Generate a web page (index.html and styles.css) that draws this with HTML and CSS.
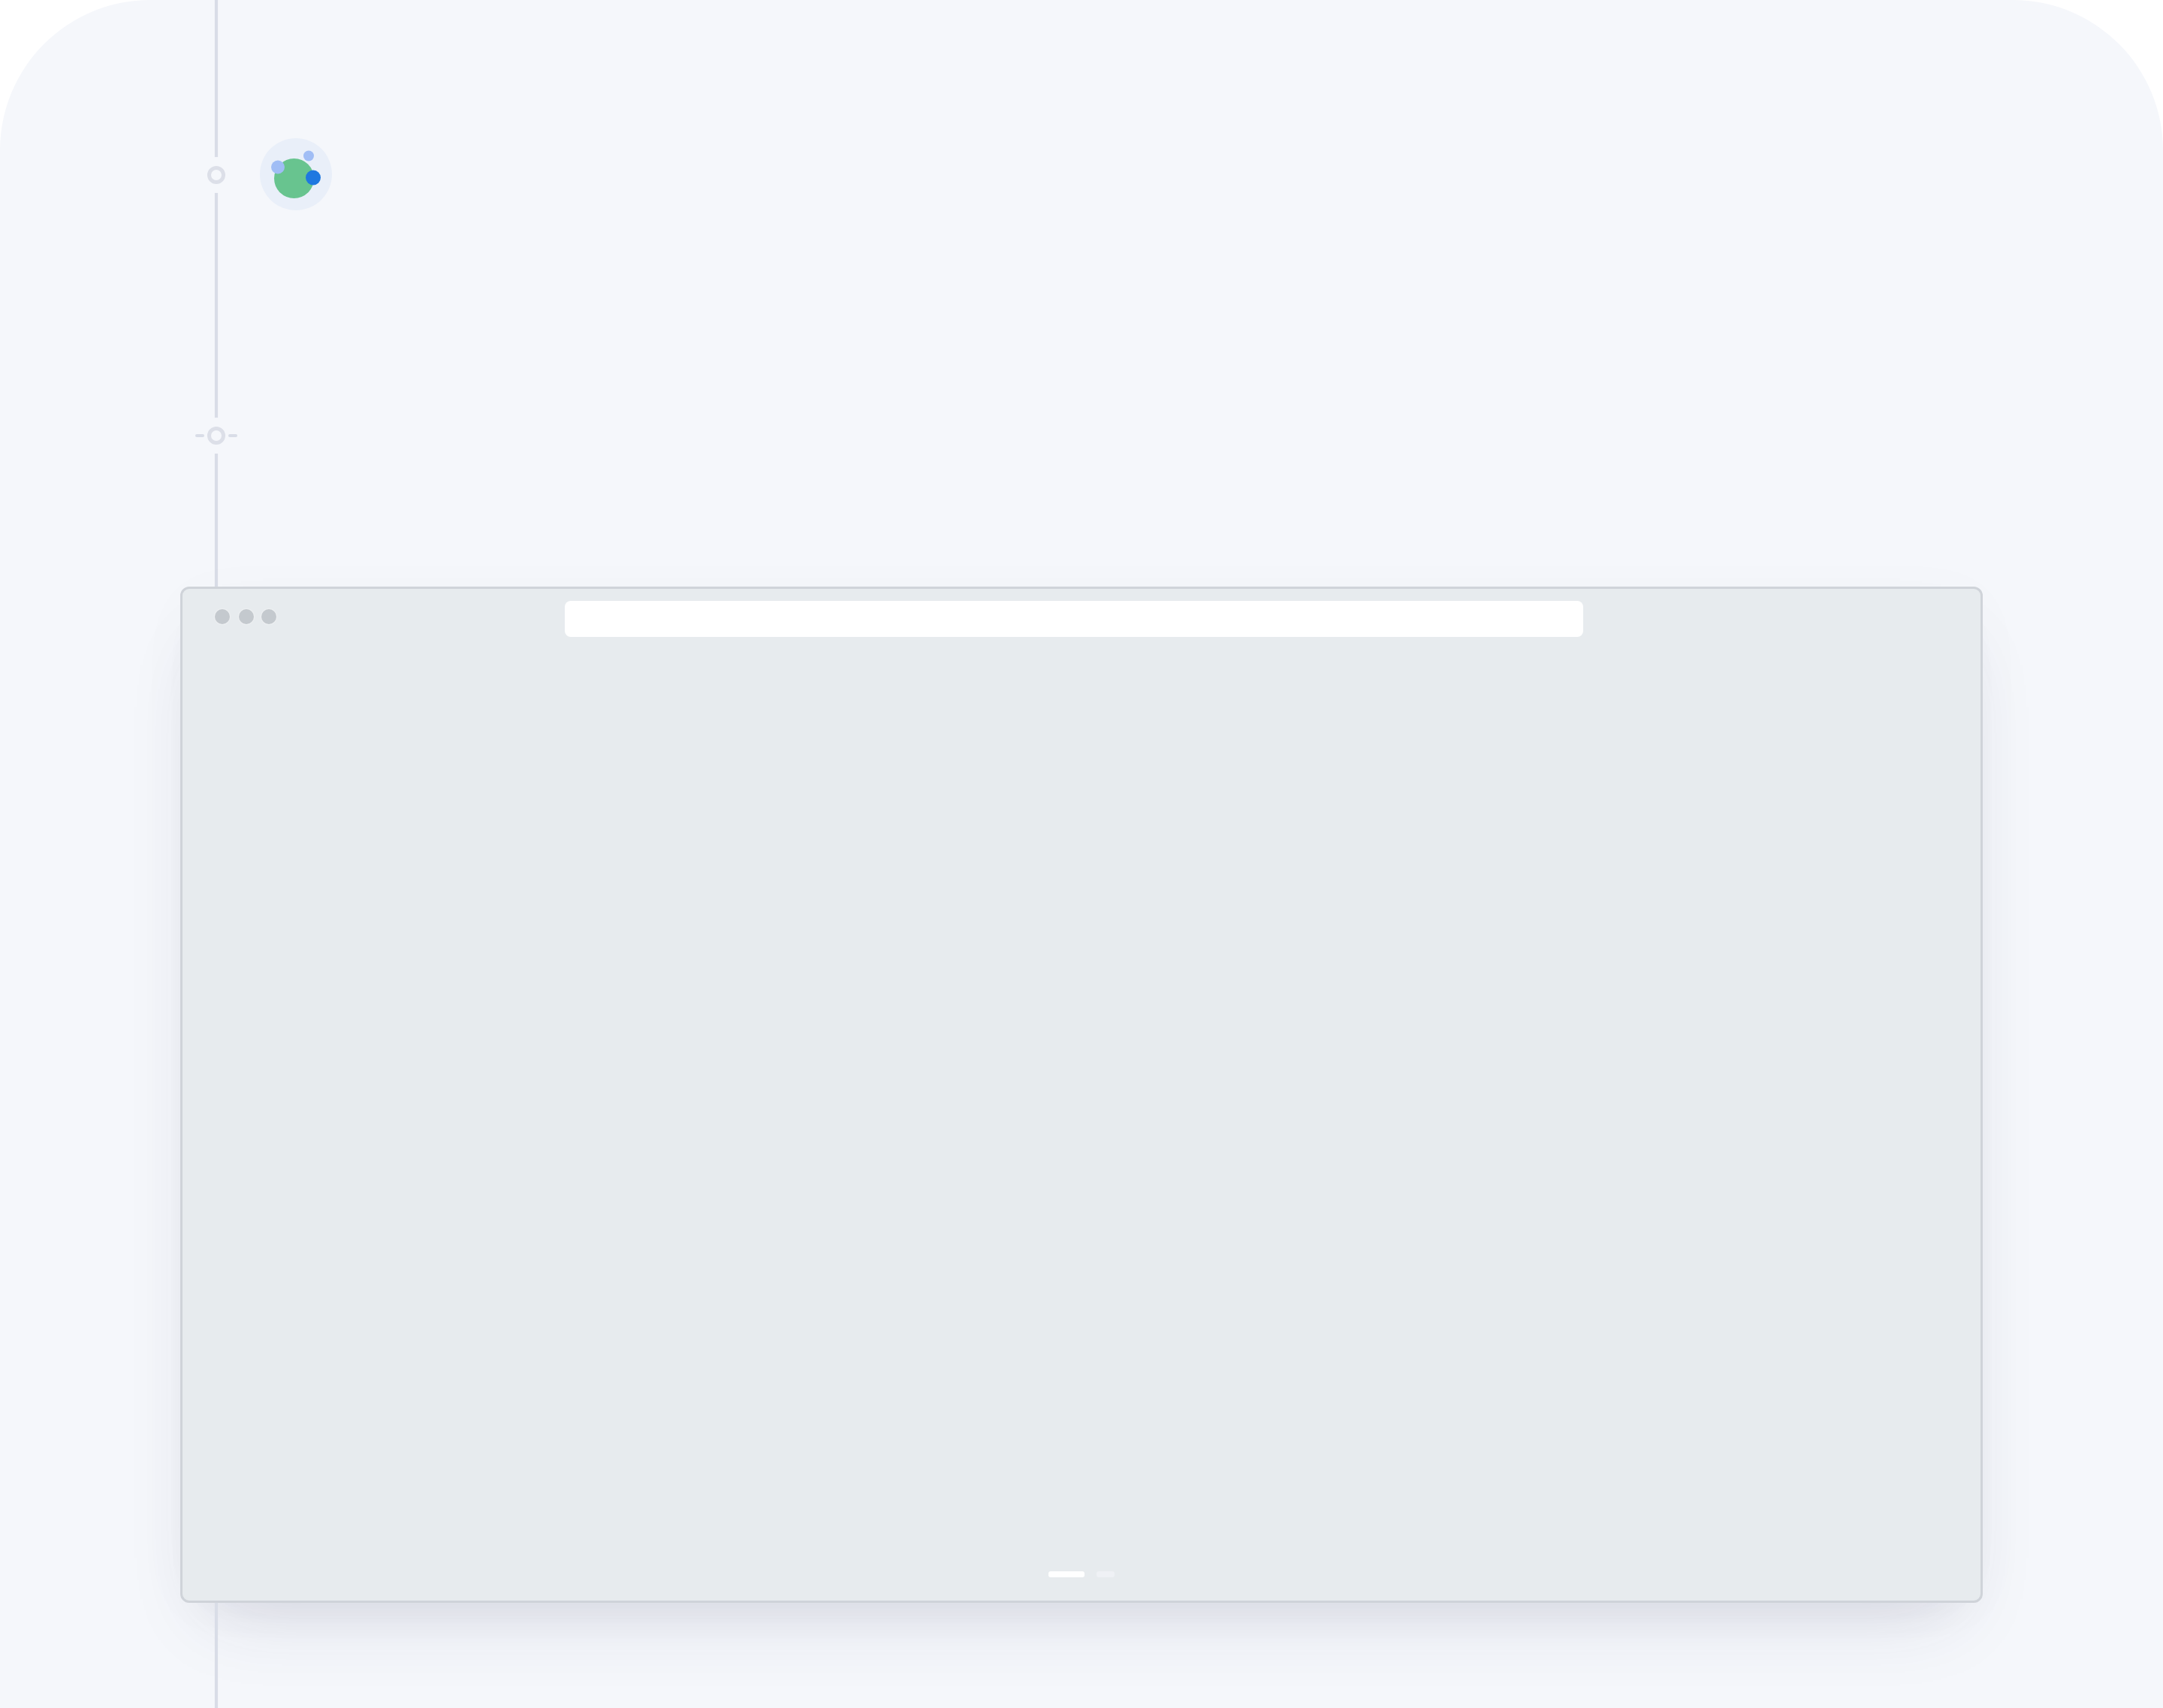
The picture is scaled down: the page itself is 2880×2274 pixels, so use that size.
FILE: index.html
```html
<!DOCTYPE html>
<html lang="en">
<head>
    <meta charset="UTF-8">
    <meta name="viewport" content="width=device-width, initial-scale=1.0">
    <title>Landing page</title>
    <link rel="stylesheet" href="styles.css">
</head>
<body>
    <div class="page">
        <div class="hero">
            <div class="rail-line"></div>
            <div class="rail-node"><span class="ring"></span></div>
            <svg class="logo" viewBox="0 0 96 96" width="96" height="96" aria-hidden="true">
                <circle cx="48" cy="48" r="48" fill="#e9eff9"/>
                <circle cx="45.5" cy="53.5" r="26.5" fill="#68c48f"/>
                <circle cx="24" cy="38.5" r="9" fill="#a0bdf5"/>
                <circle cx="65" cy="23.5" r="7" fill="#a0bdf5"/>
                <circle cx="71" cy="52.5" r="10" fill="#1f78e0"/>
            </svg>
            <div class="rail-line"></div>
            <div class="rail-node">
                <span class="dash"></span>
                <span class="ring"></span>
                <span class="dash"></span>
            </div>
            <div class="rail-line"></div>
        </div>

        <div class="window">
            <div class="toolbar">
                <div class="dots">
                    <span class="dot"></span>
                    <span class="dot"></span>
                    <span class="dot"></span>
                </div>
                <div class="address"></div>
            </div>
            <div class="pager">
                <span class="pager-item active"></span>
                <span class="pager-item"></span>
            </div>
        </div>

        <div class="rail-end"></div>
    </div>
</body>
</html>
```

FILE: styles.css
```css
body {
    margin: 0;
    background: #ffffff;
}

.page {
    display: flex;
    flex-direction: column;
    height: 2274px;
    overflow: hidden;
    background: #f5f7fb;
    border-radius: 200px 200px 0 0;
}

.hero {
    display: grid;
    grid-template-columns: 96px 96px;
    grid-template-rows: 209px 48px 299px 48px 177px;
    column-gap: 10px;
    padding-left: 240px;
}

.rail-line {
    grid-column: 1;
    justify-self: center;
    width: 4px;
    background: #d9dde7;
    box-shadow: 0 0 1px #d9dde7;
}

.rail-node {
    grid-column: 1;
    display: flex;
    align-items: center;
    justify-content: center;
    gap: 4px;
}

.ring {
    width: 24px;
    height: 24px;
    box-sizing: border-box;
    border: 5px solid #dcdfe8;
    border-radius: 50%;
}

.dash {
    width: 12px;
    height: 4px;
    background: #d9dde7;
    border-radius: 2px;
}

.logo {
    grid-column: 2;
    grid-row: 2;
    align-self: center;
    margin: -25px 0 -23px;
}

.window {
    display: flex;
    flex-direction: column;
    justify-content: space-between;
    flex: none;
    height: 1353px;
    margin: 0 240px;
    box-sizing: border-box;
    background: #e7ebee;
    border: 3px solid #cfd3d9;
    border-radius: 12px;
    box-shadow: 0 50px 100px -40px rgba(50, 50, 93, 0.15), 0 30px 60px -30px rgba(0, 0, 0, 0.04), 0 10px 90px rgba(50, 50, 93, 0.02);
}

.toolbar {
    display: flex;
    align-items: flex-start;
    padding: 16px 0 0 43px;
}

.dots {
    display: flex;
    gap: 12px;
    width: 76px;
    margin-top: 11px;
}

.dot {
    flex: none;
    width: 20px;
    height: 20px;
    background: #c4c9ce;
    border-radius: 50%;
    box-shadow: 0 0 0 1px #eef0f2;
}

.dot:last-child {
    margin-left: -2px;
}

.address {
    width: 1356px;
    height: 48px;
    margin-left: 390px;
    background: #ffffff;
    border-radius: 8px;
}

.pager {
    display: flex;
    justify-content: center;
    gap: 16px;
    padding-bottom: 31px;
}

.pager-item {
    width: 24px;
    height: 8px;
    background: #eff1f5;
    border-radius: 3px;
}

.pager-item.active {
    width: 48px;
    background: #ffffff;
}

.rail-end {
    flex: 1;
    width: 4px;
    margin-left: 286px;
    background: #d9dde7;
    box-shadow: 0 0 1px #d9dde7;
}
```
